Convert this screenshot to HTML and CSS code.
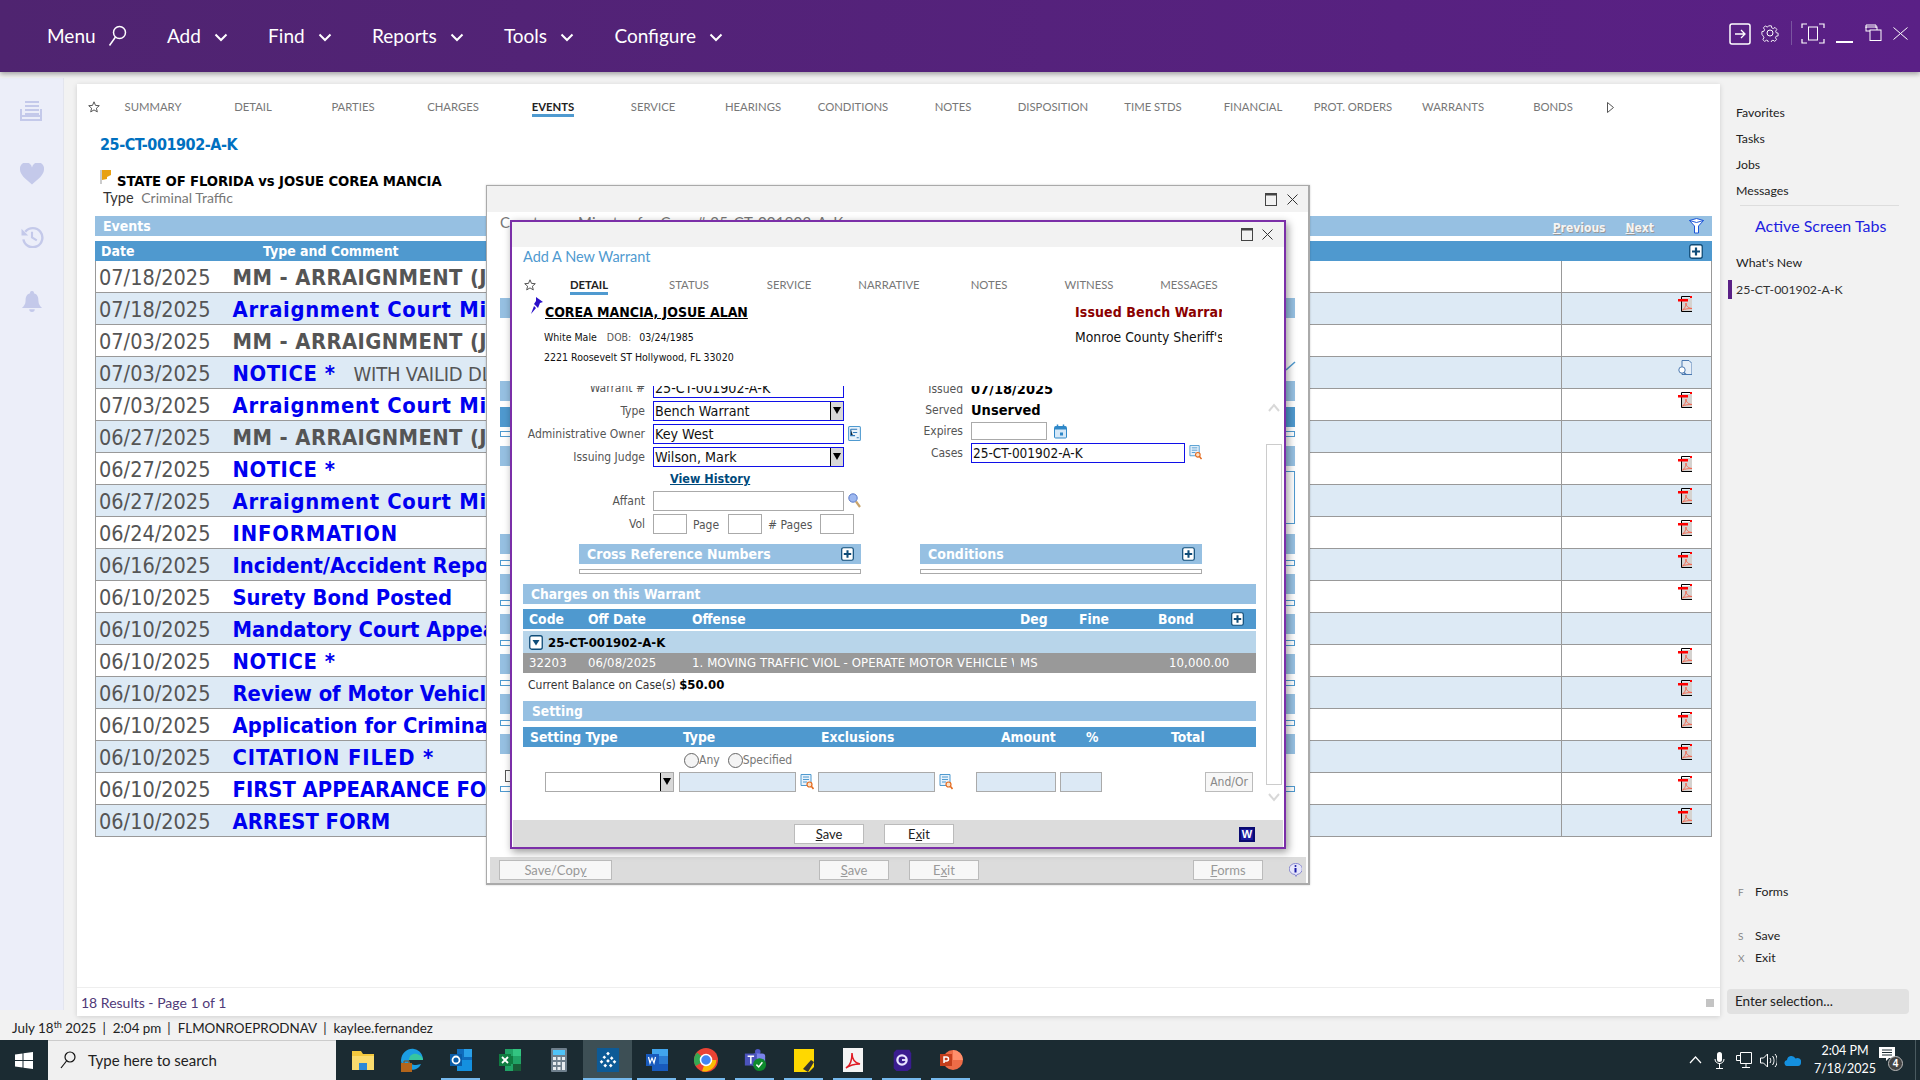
FILE: index.html
```html
<!DOCTYPE html>
<html lang="en">
<head>
<meta charset="utf-8">
<title>25-CT-001902-A-K</title>
<link rel="stylesheet" href="styles.css">
</head>
<body>
<svg class="defs" width="0" height="0" aria-hidden="true">
  <symbol id="chev" viewBox="0 0 14 9"><path d="M1.500 1.500 7 7l5.500-5.500" fill="none" stroke="#fff" stroke-width="2"/></symbol>
  <symbol id="pdf" viewBox="0 0 14 16"><rect x="3.500" y="2" width="10.500" height="13.500" fill="#d5d2cf"/><path d="M3.500 4v11.500H14" fill="none" stroke="#000"/><path d="M3.500.5h10" stroke="#000"/><path d="M3.500.5V3" stroke="#000"/><rect x="0" y="3" width="10" height="2.500" fill="#f00"/><rect x="12" y="0" width="2" height="2" fill="#f00"/><path d="M4.500 14c2-1 3.500-4 3.500-7 0 3 2 5 6 5.500-4 0-7 .5-9.500 1.500z" fill="none" stroke="#f4634d" stroke-width=".9"/></symbol>
  <symbol id="plus" viewBox="0 0 14 15"><rect x=".75" y=".75" width="12.500" height="13.500" rx="2" fill="#fff" stroke="#0f4c78" stroke-width="1.300"/><path d="M7 3.500v8M3 7.500h8" stroke="#0f4c78" stroke-width="2.200"/></symbol>
  <symbol id="pick" viewBox="0 0 14 16"><path d="M1 .5h10v11H1z" fill="#e8f2fb" stroke="#4f9ad0"/><path d="M3 3h6M3 5.500h6M3 8h4" stroke="#4f9ad0"/><circle cx="9.500" cy="10.500" r="2.500" fill="#fde2c8" stroke="#e46a1e" stroke-width="1.200"/><path d="m11.500 12.500 2 2.500" stroke="#e46a1e" stroke-width="1.600"/></symbol>
  <symbol id="restore" viewBox="0 0 12 13"><rect x=".5" y=".5" width="11" height="12" fill="none" stroke="#444"/><path d="M0 1.500h12" stroke="#444" stroke-width="2"/></symbol>
  <symbol id="close" viewBox="0 0 11 11"><path d="M.5.5l10 10M10.500.5l-10 10" stroke="#333" fill="none"/></symbol>
  <symbol id="star" viewBox="0 0 12 12"><path d="M6 .8l1.500 3.600 3.800.3-2.900 2.500.9 3.700L6 8.900 2.700 10.900l.9-3.700L.7 4.700l3.800-.3z" fill="none" stroke="#555"/></symbol>
</svg>

<header class="topbar">
  <nav class="menu">
    <span class="menu-item">Menu
      <svg class="ic-search" viewBox="0 0 19 22"><circle cx="11.500" cy="7.500" r="6" fill="none" stroke="#fff" stroke-width="1.500"/><path d="M7.500 12 1.500 20.500" stroke="#fff" stroke-width="1.500"/></svg>
    </span>
    <span class="menu-item">Add <svg class="ic-chev"><use href="#chev"/></svg></span>
    <span class="menu-item">Find <svg class="ic-chev"><use href="#chev"/></svg></span>
    <span class="menu-item">Reports <svg class="ic-chev"><use href="#chev"/></svg></span>
    <span class="menu-item">Tools <svg class="ic-chev"><use href="#chev"/></svg></span>
    <span class="menu-item">Configure <svg class="ic-chev"><use href="#chev"/></svg></span>
  </nav>
  <div class="win-tools">
    <svg class="wt wt-arrow" viewBox="0 0 22 22"><rect x="1" y="1" width="20" height="20" rx="2" fill="none" stroke="#fff" stroke-width="1.500"/><path d="M6 11h10M12 7l4 4-4 4" fill="none" stroke="#fff" stroke-width="1.300"/></svg>
    <svg class="wt wt-gear" viewBox="0 0 18 18"><circle cx="9" cy="9" r="3" fill="none" stroke="#fff"/><path d="M7.500 1h3l.4 2.300 1.700.8 2-1.300 2 2.200-1.300 2 .6 1.700 2.100.5v3l-2.200.4-.7 1.700 1.300 2-2.100 2-2-1.300-1.600.7-.5 2.200h-3l-.4-2.200-1.700-.7-2 1.300-2.100-2 1.300-2-.7-1.700L0 10.500v-3l2.300-.5.700-1.700-1.300-2 2.100-2.200 2 1.300 1.300-.7z" transform="translate(.9 .9) scale(.9)" fill="none" stroke="#fff"/></svg>
    <span class="wt-sep"></span>
    <svg class="wt wt-full" viewBox="0 0 24 21"><path d="M1 5V1h5M18 1h5v4M23 16v4h-5M6 20H1v-4" fill="none" stroke="#fff" stroke-width="1.200"/><rect x="7.500" y="4" width="9" height="13" fill="none" stroke="#fff"/></svg>
    <span class="wt-min"></span>
    <svg class="wt wt-rest" viewBox="0 0 17 17"><path d="M1 4V1h10v3" fill="none" stroke="#fff"/><rect x="1" y="3" width="11" height="4" fill="none" stroke="#fff"/><rect x="5" y="6" width="11" height="10.500" fill="#572084" stroke="#fff"/></svg>
    <svg class="wt wt-x" viewBox="0 0 15 13"><path d="M.5.5l14 12M14.500.5l-14 12" stroke="#fff" fill="none"/></svg>
  </div>
</header>

<div class="middle">
  <aside class="rail">
    <svg class="rail-ic" viewBox="0 0 24 20"><path d="M1 8v11h20V8M5 1h14M5 5h14M5 9h14M5 13h14M1 15h20" fill="none" stroke="#c4c9ea" stroke-width="2"/></svg>
    <svg class="rail-ic" viewBox="0 0 24 21"><path d="M12 21C5 15 0 11 0 6a6 6 0 0 1 12-2 6 6 0 0 1 12 2c0 5-5 9-12 15z" fill="#c4c9ea"/></svg>
    <svg class="rail-ic" viewBox="0 0 24 23"><path d="M5 6a10 10 0 1 1-2 8" fill="none" stroke="#c4c9ea" stroke-width="2.500"/><path d="M1 3v7h7z" fill="#c4c9ea"/><path d="M12 6v6l5 3" fill="none" stroke="#c4c9ea" stroke-width="2.200"/></svg>
    <svg class="rail-ic rail-bell" viewBox="0 0 22 24"><path d="M11 0a2 2 0 0 1 2 2.500c4 1 5 4 5 8 0 4 2 6 4 8H0c2-2 4-4 4-8 0-4 1-7 5-8A2 2 0 0 1 11 0zM8 20h6a3 3 0 0 1-6 0z" fill="#c4c9ea"/></svg>
  </aside>

  <main class="card">
    <div class="card-body">
      <div class="tabs">
        <svg class="tab-star"><use href="#star"/></svg>
        <span class="tab"><span>SUMMARY</span></span>
        <span class="tab"><span>DETAIL</span></span>
        <span class="tab"><span>PARTIES</span></span>
        <span class="tab"><span>CHARGES</span></span>
        <span class="tab tab-on"><span>EVENTS</span></span>
        <span class="tab"><span>SERVICE</span></span>
        <span class="tab"><span>HEARINGS</span></span>
        <span class="tab"><span>CONDITIONS</span></span>
        <span class="tab"><span>NOTES</span></span>
        <span class="tab"><span>DISPOSITION</span></span>
        <span class="tab"><span>TIME STDS</span></span>
        <span class="tab"><span>FINANCIAL</span></span>
        <span class="tab"><span>PROT. ORDERS</span></span>
        <span class="tab"><span>WARRANTS</span></span>
        <span class="tab"><span>BONDS</span></span>
        <svg class="tab-next" viewBox="0 0 7 11"><path d="M.5.5l6 5-6 5z" fill="none" stroke="#555"/></svg>
      </div>
      <div class="case-no">25-CT-001902-A-K</div>
      <div class="case-title">
        <svg class="flag" viewBox="0 0 12 14"><path d="M1 0v14" stroke="#999"/><path d="M2 0h9v5l-4 2v2L2 10z" fill="#e8a012"/></svg>
        STATE OF FLORIDA vs JOSUE COREA MANCIA
      </div>
      <div class="case-type"><span>Type</span> <span class="muted">Criminal Traffic</span></div>

      <section class="events">
        <div class="ev-bar">
          <span class="ev-bar-title">Events</span>
          <span class="pager"><u>P</u>revious</span>
          <span class="pager pager-next"><u>N</u>ext</span>
          <svg class="filter" viewBox="0 0 15 16"><path d="M.5 2.500 7.500.5l7 2L9.500 8v7h-4V8z" fill="#fff" stroke="#1b55d8"/><path d="M.5 2.500l7 2 7-2" fill="none" stroke="#1b55d8"/></svg>
        </div>
        <div class="ev-head">
          <span class="h-date">Date</span><span class="h-type">Type and Comment</span>
          <svg class="h-plus"><use href="#plus"/></svg>
        </div>
        <div class="ev-row"><div class="c-main"><span class="date">07/18/2025</span><b class="t-gray ls-m">MM - ARRAIGNMENT (JUDGE)</b></div><div class="c-side"></div></div>
        <div class="ev-row alt"><div class="c-main"><span class="date">07/18/2025</span><b class="t-blue ls-a">Arraignment Court Minutes</b></div><div class="c-side"><svg class="pdf"><use href="#pdf"/></svg></div></div>
        <div class="ev-row"><div class="c-main"><span class="date">07/03/2025</span><b class="t-gray ls-m">MM - ARRAIGNMENT (JUDGE)</b></div><div class="c-side"></div></div>
        <div class="ev-row alt"><div class="c-main"><span class="date">07/03/2025</span><b class="t-blue ls-n">NOTICE *</b><span class="comment">WITH VAILID DL</span></div><div class="c-side"><svg class="pdf" viewBox="0 0 14 16"><path d="M4 .5h7l3 3v11H4z" fill="#e6eef7" stroke="#4a78b0"/><circle cx="4" cy="10" r="3.200" fill="#fff" stroke="#4a78b0"/><path d="m6 12.500 2 2" stroke="#4a78b0" stroke-width="1.500"/></svg></div></div>
        <div class="ev-row"><div class="c-main"><span class="date">07/03/2025</span><b class="t-blue ls-a">Arraignment Court Minutes</b></div><div class="c-side"><svg class="pdf"><use href="#pdf"/></svg></div></div>
        <div class="ev-row alt"><div class="c-main"><span class="date">06/27/2025</span><b class="t-gray ls-m">MM - ARRAIGNMENT (JUDGE)</b></div><div class="c-side"></div></div>
        <div class="ev-row"><div class="c-main"><span class="date">06/27/2025</span><b class="t-blue ls-n">NOTICE *</b></div><div class="c-side"><svg class="pdf"><use href="#pdf"/></svg></div></div>
        <div class="ev-row alt"><div class="c-main"><span class="date">06/27/2025</span><b class="t-blue ls-a">Arraignment Court Minutes</b></div><div class="c-side"><svg class="pdf"><use href="#pdf"/></svg></div></div>
        <div class="ev-row"><div class="c-main"><span class="date">06/24/2025</span><b class="t-blue ls-i">INFORMATION</b></div><div class="c-side"><svg class="pdf"><use href="#pdf"/></svg></div></div>
        <div class="ev-row alt"><div class="c-main"><span class="date">06/16/2025</span><b class="t-blue">Incident/Accident Report</b></div><div class="c-side"><svg class="pdf"><use href="#pdf"/></svg></div></div>
        <div class="ev-row"><div class="c-main"><span class="date">06/10/2025</span><b class="t-blue">Surety Bond Posted</b></div><div class="c-side"><svg class="pdf"><use href="#pdf"/></svg></div></div>
        <div class="ev-row alt"><div class="c-main"><span class="date">06/10/2025</span><b class="t-blue">Mandatory Court Appearance</b></div><div class="c-side"></div></div>
        <div class="ev-row"><div class="c-main"><span class="date">06/10/2025</span><b class="t-blue ls-n">NOTICE *</b></div><div class="c-side"><svg class="pdf"><use href="#pdf"/></svg></div></div>
        <div class="ev-row alt"><div class="c-main"><span class="date">06/10/2025</span><b class="t-blue">Review of Motor Vehicle</b></div><div class="c-side"><svg class="pdf"><use href="#pdf"/></svg></div></div>
        <div class="ev-row"><div class="c-main"><span class="date">06/10/2025</span><b class="t-blue">Application for Criminal</b></div><div class="c-side"><svg class="pdf"><use href="#pdf"/></svg></div></div>
        <div class="ev-row alt"><div class="c-main"><span class="date">06/10/2025</span><b class="t-blue ls-i">CITATION FILED *</b></div><div class="c-side"><svg class="pdf"><use href="#pdf"/></svg></div></div>
        <div class="ev-row"><div class="c-main"><span class="date">06/10/2025</span><b class="t-blue">FIRST APPEARANCE FORM</b></div><div class="c-side"><svg class="pdf"><use href="#pdf"/></svg></div></div>
        <div class="ev-row alt"><div class="c-main"><span class="date">06/10/2025</span><b class="t-blue">ARREST FORM</b></div><div class="c-side"><svg class="pdf"><use href="#pdf"/></svg></div></div>
      </section>
    </div>
    <footer class="card-foot"><span>18 Results - Page 1 of 1</span><i class="foot-sq"></i></footer>
  </main>

  <aside class="side">
    <a class="s-link">Favorites</a>
    <a class="s-link">Tasks</a>
    <a class="s-link">Jobs</a>
    <a class="s-link">Messages</a>
    <div class="s-rule"></div>
    <div class="s-head">Active Screen Tabs</div>
    <a class="s-link s-new">What's New</a>
    <a class="s-active">25-CT-001902-A-K</a>
    <div class="s-keys">
      <div class="s-key s-key-forms"><i>F</i>Forms</div>
      <div class="s-key s-key-save"><i>S</i>Save</div>
      <div class="s-key s-key-exit"><i>X</i>Exit</div>
    </div>
    <div class="s-enter">Enter selection...</div>
  </aside>
</div>

<div class="status">July 18<sup>th</sup> 2025<i class="st-sep">|</i>2:04 pm<i class="st-sep">|</i>FLMONROEPRODNAV<i class="st-sep">|</i>kaylee.fernandez</div>

<footer class="taskbar">
  <svg class="start" viewBox="0 0 18 17"><path d="M0 2.500 7.500 1.400V8H0zM8.500 1.300 18 0v8H8.500zM0 9h7.500v6.600L0 14.500zM8.500 9H18v8l-9.500-1.300z" fill="#fff"/></svg>
  <div class="tb-search">
    <svg class="tb-search-ic" viewBox="0 0 16 18"><circle cx="10" cy="6" r="5" fill="none" stroke="#111" stroke-width="1.200"/><path d="M6.500 10 1 17" stroke="#111" stroke-width="1.200"/></svg>
    <span>Type here to search</span>
  </div>
  <div class="tb-apps">
    <span class="app"><svg viewBox="0 0 24 24"><path d="M1 3h9l2 3h11v16H1z" fill="#f4c93e"/><path d="M1 8h22v14H1z" fill="#fbdc6e"/><path d="M8 15h8v7H8z" fill="#2b88d8"/></svg></span>
    <span class="app"><svg viewBox="0 0 24 24"><path d="M1 12C2 4 8 0 14 1c6 1 9 6 9 11H9c0 3 3 5 7 5 2 0 4-1 5-1-2 5-8 7-13 5C3 19 1 16 1 12z" fill="#1b9de2"/><path d="M9 12C9 7 13 5 17 6c3 1 6 3 6 6z" fill="#37c6a0"/><rect x="1" y="15" width="11" height="9" fill="#b3651b"/><path d="M4 15v-2h5v2" fill="none" stroke="#8a4a10"/></svg></span>
    <span class="app on"><svg viewBox="0 0 24 24"><path d="M8 1h15v22H8z" fill="#0f6cbd"/><path d="M15 1h8v8h-8z" fill="#2aa0e8"/><path d="M8 12l15 0v11H8z" fill="#1490df"/><rect x="1" y="6" width="12" height="12" fill="#0a5ca8"/><circle cx="7" cy="12" r="3.500" fill="none" stroke="#fff" stroke-width="1.800"/></svg></span>
    <span class="app"><svg viewBox="0 0 24 24"><path d="M7 1h16v22H7z" fill="#21a366"/><path d="M15 1h8v7h-8z" fill="#33c481"/><path d="M7 8h8v8H7z" fill="#107c41"/><path d="M15 16h8v7h-8z" fill="#185c37"/><rect x="1" y="6" width="12" height="12" fill="#107c41"/><path d="M4 9l6 6M10 9l-6 6" stroke="#fff" stroke-width="1.800"/></svg></span>
    <span class="app"><svg viewBox="0 0 24 24"><rect x="4" y="0" width="16" height="24" rx="1" fill="#6e7f8c"/><rect x="6" y="2" width="12" height="5" fill="#4fc3f7"/><path d="M6 9h3v3H6zM10.500 9h3v3h-3zM15 9h3v3h-3zM6 14h3v3H6zM10.500 14h3v3h-3zM15 14h3v8h-3zM6 19h3v3H6zM10.500 19h3v3h-3z" fill="#e8edf0"/></svg></span>
    <span class="app app-active on"><svg viewBox="0 0 24 26"><rect width="24" height="26" fill="#0d5a96"/><path d="M12 4l2 2-2 2-2-2zM8 8l2 2-2 2-2-2zM16 9l2 2-2 2-2-2zM5 13l2 2-2 2-2-2zM12 12l2 2-2 2-2-2zM19 13l2 2-2 2-2-2zM9 17l2 2-2 2-2-2zM15 17l2 2-2 2-2-2z" fill="#fff"/></svg></span>
    <span class="app on"><svg viewBox="0 0 24 24"><path d="M7 1h16v22H7z" fill="#2b7cd3"/><path d="M7 1h16v7H7z" fill="#41a5ee"/><path d="M7 16h16v7H7z" fill="#185abd"/><rect x="1" y="6" width="13" height="12" fill="#185abd"/><path d="M3.500 9l1.500 6 2-5 2 5 1.500-6" fill="none" stroke="#fff" stroke-width="1.200"/></svg></span>
    <span class="app on"><svg viewBox="0 0 24 24"><circle cx="12" cy="12" r="12" fill="#ea4335"/><path d="M12 12 1.600 18A12 12 0 0 1 3 4.500z" fill="#34a853"/><path d="M12 12l10.400 0A12 12 0 0 1 8 23.300z" fill="#fbbc05"/><circle cx="12" cy="12" r="5.500" fill="#4285f4" stroke="#fff" stroke-width="1.500"/></svg></span>
    <span class="app on"><svg viewBox="0 0 24 26"><circle cx="15" cy="4" r="3" fill="#5059c9"/><rect x="9" y="6" width="14" height="14" rx="3" fill="#7b83eb"/><rect x="1" y="6" width="13" height="13" fill="#4b53bc"/><path d="M4 9h7M7.500 9v8" stroke="#fff" stroke-width="1.600"/><circle cx="17" cy="18" r="7" fill="#0e8a2c"/><path d="M13.500 18l2.500 2.500 4-5" fill="none" stroke="#fff" stroke-width="1.600"/></svg></span>
    <span class="app on"><svg viewBox="0 0 24 24"><path d="M2 1h20v18l-5 5H2z" fill="#ffd800"/><path d="M11 21l8-9 3 2-6 10z" fill="#333"/></svg></span>
    <span class="app on"><svg viewBox="0 0 24 24"><path d="M2 0h20v24H2z" fill="#f4f4f4"/><path d="M5 20c4-2 6-8 6-15 0 6 3 10 8 11-6 0-10 1-14 4z" fill="none" stroke="#e01b24" stroke-width="1.500"/></svg></span>
    <span class="app on"><svg viewBox="0 0 24 26"><path d="M6 2h14l2 4v16l-4 3H6l-3-3V5z" fill="#3a1c90"/><circle cx="12" cy="13" r="5" fill="none" stroke="#e8e4ff" stroke-width="2.500"/><path d="M12 13h5" stroke="#e8e4ff" stroke-width="2"/></svg></span>
    <span class="app on"><svg viewBox="0 0 24 24"><circle cx="14" cy="12" r="10" fill="#ed6c47"/><path d="M14 2a10 10 0 0 1 10 10H14z" fill="#ff8f6b"/><rect x="1" y="6" width="12" height="12" fill="#c43e1c"/><path d="M5 15V9h2.500a2 2 0 0 1 0 4H5" fill="none" stroke="#fff" stroke-width="1.500"/></svg></span>
  </div>
  <div class="tray">
    <svg class="tr tr-chev" viewBox="0 0 13 8"><path d="M1 7l5.500-6L12 7" fill="none" stroke="#fff" stroke-width="1.200"/></svg>
    <svg class="tr tr-mic" viewBox="0 0 11 17"><rect x="3" y="0" width="5" height="10" rx="2.500" fill="#fff"/><path d="M1 7c0 6 9 6 9 0M5.500 11v5M2 16.500h7" fill="none" stroke="#fff"/></svg>
    <svg class="tr tr-net" viewBox="0 0 16 16"><path d="M4.500.5h11v11h-11zM.5 3.500h4M.5 3.500v5h4M10 12v3M6 15.500h8" fill="none" stroke="#fff"/></svg>
    <svg class="tr tr-vol" viewBox="0 0 17 15"><path d="M.5 5h3l4-4v13l-4-4h-3z" fill="none" stroke="#fff"/><path d="M10 5c1 1.500 1 3.500 0 5M12.500 3c2 2.500 2 6.500 0 9M15 1c3 3.500 3 9.500 0 13" fill="none" stroke="#fff"/></svg>
    <svg class="tr tr-cloud" viewBox="0 0 17 11"><path d="M4 11a3 3 0 0 1-1-6 4.500 4.500 0 0 1 8.500-1.500A3.800 3.800 0 0 1 17 8c0 1.500-1 3-3 3z" fill="#1490df"/></svg>
    <div class="clock"><div>2:04 PM</div><div>7/18/2025</div></div>
    <div class="notif">
      <svg class="notif-ic" viewBox="0 0 16 14"><path d="M0 0h16v11h-6l-3 3v-3H0z" fill="#fff"/><path d="M3 3h10M3 5.500h10M3 8h10" stroke="#1b2b32"/></svg>
      <span class="notif-badge">4</span>
    </div>
    <i class="tr-edge"></i>
  </div>
</footer>

<!-- Floating windows -->
<div class="win win-back">
  <div class="win-title"><svg class="w-rest"><use href="#restore"/></svg><svg class="w-x"><use href="#close"/></svg></div>
  <div class="back-body">
    <div class="back-head">Courtroom Minutes for Case # 25-CT-001902-A-K</div>
    <div class="g g1"></div>
    <div class="g g2"></div>
    <div class="g g3 dark"></div>
    <div class="g g4 out"></div>
    <div class="g g5"></div>
    <div class="g g6 out"></div>
    <div class="g g7"></div>
    <div class="g g8 out"></div>
    <div class="g g9"></div>
    <div class="g g8 out"></div>
    <div class="g g9"></div>
    <div class="g g8 out"></div>
    <div class="g g9"></div>
    <div class="g g8 out"></div>
    <div class="g g9"></div>
    <div class="g g8 out"></div>
    <div class="g g9"></div>
    <div class="g g10 out"></div>
    <i class="back-check"></i>
    <svg class="back-tick" viewBox="0 0 10 10"><path d="M0 9 9 1" stroke="#4f99cf" stroke-width="1.500"/></svg>
  </div>
  <div class="win-foot back-foot">
    <span class="btn dis b-copy"><span>Save/Cop<u>y</u></span></span>
    <span class="btn dis b-save"><span><u>S</u>ave</span></span>
    <span class="btn dis b-exit"><span>E<u>x</u>it</span></span>
    <span class="btn dis b-forms"><span><u>F</u>orms</span></span>
    <svg class="info" viewBox="0 0 13 14"><path d="M6.500.5a6 5.500 0 0 1 1.500 11l-1 2-1-2a6 5.500 0 0 1 .5-11z" fill="#e6e6fa" stroke="#8a8ad0"/><circle cx="6.500" cy="3" r="1" fill="#1a1aa8"/><path d="M6.500 5v4.500" stroke="#1a1aa8" stroke-width="2"/></svg>
  </div>
</div>

<div class="win win-front">
  <div class="win-title wf-title"><svg class="w-rest"><use href="#restore"/></svg><svg class="w-x"><use href="#close"/></svg></div>
  <div class="wf-head">Add A New Warrant</div>
  <div class="wf-tabs">
    <svg class="wf-star"><use href="#star"/></svg>
    <span class="tab tab-on"><span>DETAIL</span></span>
    <span class="tab"><span>STATUS</span></span>
    <span class="tab"><span>SERVICE</span></span>
    <span class="tab"><span>NARRATIVE</span></span>
    <span class="tab"><span>NOTES</span></span>
    <span class="tab"><span>WITNESS</span></span>
    <span class="tab"><span>MESSAGES</span></span>
  </div>
  <div class="person">
    <div class="person-l">
      <div class="p-name">
        <svg class="pin" viewBox="0 0 14 17"><path d="M6 0l7 5-3 1-2 5-4-4 2-3zM4 9l-3 8 5-6" fill="#2a10c8"/></svg>
        <u>COREA MANCIA, JOSUE ALAN</u>
      </div>
      <div class="p-sub">White Male <span class="p-dob">DOB:</span> 03/24/1985</div>
      <div class="p-sub p-addr">2221 Roosevelt ST Hollywood, FL 33020</div>
    </div>
    <div class="person-r">
      <div class="p-status">Issued Bench Warrant</div>
      <div class="p-agency">Monroe County Sheriff's Office</div>
    </div>
  </div>
  <div class="scroller">
    <div class="form">
      <div class="f-col f-left">
        <div class="frow"><label>Warrant #</label><span class="in in-blue in-w">25-CT-001902-A-K</span></div>
        <div class="frow"><label>Type</label><span class="in in-blue in-w in-sel">Bench Warrant<i class="arrow"></i></span></div>
        <div class="frow"><label>Administrative Owner</label><span class="in in-blue in-w">Key West</span>
          <svg class="f-ic" viewBox="0 0 12 14"><rect x=".5" y=".5" width="11" height="13" rx="1" fill="#e8f2fb" stroke="#4f9ad0"/><path d="M2.500 3h6M2.500 3v6h2M4.500 6h4M4.500 9h2M8 11h2" stroke="#2f78b8"/></svg></div>
        <div class="frow"><label>Issuing Judge</label><span class="in in-blue in-w in-sel">Wilson, Mark<i class="arrow"></i></span></div>
        <div class="frow-link"><a>View History</a></div>
        <div class="frow"><label>Affant</label><span class="in in-w"></span>
          <svg class="f-ic" viewBox="0 0 13 15"><circle cx="5" cy="5" r="4.200" fill="#9db8f0" stroke="#5a7ac8"/><path d="m8 8.500 4 5.500" stroke="#c9a36a" stroke-width="2.200"/></svg></div>
        <div class="frow"><label>Vol</label><span class="in in-s"></span><em>Page</em><span class="in in-s in-p2"></span><em class="em-pages"># Pages</em><span class="in in-s in-p3"></span></div>
      </div>
      <div class="f-col f-right">
        <div class="rrow r1"><label>Issued</label><b>07/18/2025</b></div>
        <div class="rrow r1"><label>Served</label><b>Unserved</b></div>
        <div class="rrow r2"><label>Expires</label><span class="in in-exp"></span>
          <svg class="f-ic cal" viewBox="0 0 13 14"><rect x=".5" y="2" width="12" height="11.500" rx="1" fill="#d5e8f8" stroke="#2f88c8"/><path d="M1 2h11v3H1z" fill="#2f88c8"/><path d="M3.500 0v2M9.500 0v2" stroke="#2f88c8" stroke-width="1.500"/><rect x="6" y="8" width="3" height="3" fill="#2f88c8"/></svg></div>
        <div class="rrow r3"><label>Cases</label><span class="in in-blue in-case">25-CT-001902-A-K</span><svg class="f-ic pk"><use href="#pick"/></svg></div>
      </div>
    </div>
    <div class="xrefs">
      <div class="xref"><div class="bar bar-x">Cross Reference Numbers<svg class="bar-plus"><use href="#plus"/></svg></div><div class="x-empty"></div></div>
      <div class="xref"><div class="bar bar-x">Conditions<svg class="bar-plus"><use href="#plus"/></svg></div><div class="x-empty"></div></div>
    </div>
    <div class="section">
      <div class="bar">Charges on this Warrant</div>
      <div class="grid-head gh-charges">
        <span>Code</span><span>Off Date</span><span>Offense</span><span>Deg</span><span>Fine</span><span>Bond</span>
        <svg class="gh-plus"><use href="#plus"/></svg>
      </div>
      <div class="ch-group">
        <svg class="toggle" viewBox="0 0 14 15"><rect x=".75" y=".75" width="12.500" height="13.500" rx="2" fill="#fff" stroke="#0f4c78" stroke-width="1.300"/><path d="M3.500 5h7L7 10.500z" fill="#0f4c78"/></svg>
        <b>25-CT-001902-A-K</b>
      </div>
      <div class="ch-row">
        <span>32203</span><span>06/08/2025</span><span class="ch-off">1. MOVING TRAFFIC VIOL - OPERATE MOTOR VEHICLE WITHOUT</span><span>MS</span><span class="ch-bond">10,000.00</span>
      </div>
      <div class="balance">Current Balance on Case(s) <b>$50.00</b></div>
      <div class="bar bar-set">Setting</div>
      <div class="grid-head gh-setting">
        <span>Setting Type</span><span>Type</span><span>Exclusions</span><span>Amount</span><span>%</span><span>Total</span>
      </div>
      <div class="radios"><i class="radio"></i><span>Any</span><i class="radio r-2"></i><span>Specified</span></div>
      <div class="set-row">
        <span class="in in-sel set-sel"><i class="arrow"></i></span>
        <span class="in set-in set-w1"></span><svg class="f-ic set-ic"><use href="#pick"/></svg>
        <span class="in set-in set-w1 set-w2"></span><svg class="f-ic set-ic"><use href="#pick"/></svg>
        <span class="in set-in set-amt"></span>
        <span class="in set-in set-pct"></span>
        <span class="btn dis set-btn"><span>And/Or</span></span>
      </div>
    </div>
    <div class="sbar">
      <svg class="sb-arrow" viewBox="0 0 12 9"><path d="M1 8l5-6 5 6" fill="none" stroke="#d8d8d8" stroke-width="2"/></svg>
      <div class="sb-thumb"></div>
      <svg class="sb-arrow" viewBox="0 0 12 9"><path d="M1 1l5 6 5-6" fill="none" stroke="#d8d8d8" stroke-width="2"/></svg>
    </div>
  </div>
  <div class="win-foot front-foot">
    <span class="btn f-save"><span><u>S</u>ave</span></span>
    <span class="btn f-exit"><span>E<u>x</u>it</span></span>
    <span class="word-ic">W</span>
  </div>
</div>
</body>
</html>
```

FILE: styles.css
```css
* { box-sizing: border-box; }
html, body { margin: 0; height: 100%; }
body {
  width: 1920px; height: 1080px; overflow: hidden; position: relative;
  background: #f2f2f2; display: flex; flex-direction: column;
  font-family: Lato, "Open Sans", sans-serif; color: #222;
}
.defs { position: absolute; }
svg { display: block; flex: none; }

/* Top bar */
.topbar {
  height: 72px; flex: none; display: flex; align-items: center; justify-content: space-between;
  background: linear-gradient(90deg, #4f2470, #5a2086);
  box-shadow: 0 2px 5px rgba(0,0,0,.35); position: relative; z-index: 2;
  padding: 0 12px 0 47px;
}
.menu { display: flex; gap: 40.300px; }
.menu-item { color: #fff; font-size: 19px; display: flex; align-items: center; gap: 13px; line-height: 28px; }
.ic-search { width: 19px; height: 22px; margin-left: -1px; }
.ic-chev { width: 14px; height: 9px; margin-top: 3px; }
.win-tools { display: flex; align-items: flex-start; height: 24px; margin-top: -2px; }
.wt { height: auto; }
.wt-arrow { width: 22px; height: 22px; }
.wt-gear { width: 18px; height: 18px; margin: 1px 0 0 10px; }
.wt-sep { width: 1px; height: 24px; background: #7a55a0; margin: -2px 0 0 12px; }
.wt-full { width: 24px; height: 21px; margin-left: 9px; }
.wt-min { width: 17px; height: 2px; background: #fff; margin: 18px 0 0 11px; }
.wt-rest { width: 17px; height: 17px; margin: 1px 0 0 12px; }
.wt-x { width: 15px; height: 13px; margin: 4px 0 0 11px; }

/* Middle */
.middle { flex: none; height: 944px; display: flex; }
.rail {
  width: 64px; margin-top: 6px; height: 932px; background: #eceef9; border-right: 1px solid #e3e5ee;
  display: flex; flex-direction: column; align-items: center; padding-top: 22px; flex: none;
}
.rail-ic { width: 24px; height: 22px; margin-bottom: 41px; }
.rail-bell { margin-top: 2px; }
.card {
  width: 1643px; height: 932px; margin: 12px 0 0 13px; background: #fff; flex: none;
  box-shadow: 0 1px 5px rgba(0,0,0,.15); display: flex; flex-direction: column;
}
.card-body { flex: 1; }
.tabs { display: flex; align-items: flex-start; padding: 16px 0 0 11px; height: 44px; }
.tab-star { width: 12px; height: 12px; margin: 1px 3px 0 0; }
.tab { width: 100px; flex: none; text-align: center; font-size: 11.300px; color: #777; line-height: 14px; }
.tab > span { display: inline-block; height: 17px; white-space: nowrap; }
.tab-on { color: #222; font-weight: 700; }
.tab-on > span { border-bottom: 3px solid #4f9ad0; }
.tab-next { width: 7px; height: 11px; margin: 2px 0 0 4px; }
.case-no { font: 700 16px/20px "DejaVu Sans Condensed", "DejaVu Sans", sans-serif; color: #0070c0; margin: 0 0 0 23px; height: 38px; padding-top: 7px; letter-spacing: -.45px; }
.case-title { display: flex; align-items: center; font: 700 14.700px/18px "DejaVu Sans Condensed", "DejaVu Sans", sans-serif; color: #000; margin-left: 23px; height: 18px; letter-spacing: -.1px; margin-top: 6px; }
.flag { width: 12px; height: 14px; margin: -8px 5px 0 0; }
.case-type { font-size: 14.500px; line-height: 17px; margin: -1px 0 0 26px; color: #333; }
.muted { color: #777; margin-left: 4px; font-size: 14px; }

.events { margin: 10px 8px 0 18px; }
.ev-bar { height: 20px; background: #96c0e2; display: flex; align-items: center; padding-left: 8px; }
.ev-bar-title { font: 700 14px/20px "DejaVu Sans Condensed", sans-serif; color: #fff; flex: 1; }
.pager { font: 700 12px/20px "DejaVu Sans Condensed", sans-serif; color: #f4f4f4; text-shadow: 1px 1px 0 #999; margin-top: 4px; }
.pager-next { margin: 4px 0 0 20px; }
.filter { width: 15px; height: 16px; margin: 0 8px 0 35px; }
.ev-head { height: 20px; margin-top: 5px; background: #4f99cf; display: flex; align-items: center; color: #fff; font: 700 14px/22px "DejaVu Sans Condensed", sans-serif; padding-left: 6px; }
.h-date { width: 162px; }
.h-type { flex: 1; }
.h-plus { width: 14px; height: 15px; margin-right: 9px; }
.ev-row { height: 32px; display: flex; border-bottom: 1px solid #999; border-left: 1px solid #999; border-right: 1px solid #999; background: #fff; }
.alt { background: #ddeaf5; }
.c-main { width: 1466px; display: flex; align-items: center; padding: 2px 0 0 3px; font-family: "DejaVu Sans Condensed", "DejaVu Sans", sans-serif; font-size: 21.500px; white-space: nowrap; overflow: hidden; border-right: 1px solid #999; flex: none; }
.date { color: #555; width: 133.500px; flex: none; }
.t-gray, .t-blue { font-size: 21.800px; }
.t-gray { color: #555; }
.t-blue { color: #0000f0; }
.ls-m { letter-spacing: .4px; }
.ls-a { letter-spacing: .7px; }
.ls-n { letter-spacing: .55px; }
.ls-i { letter-spacing: .9px; }
.comment { color: #555; margin-left: 18px; font-size: 20px; letter-spacing: -.2px; }
.c-side { flex: 1; padding: 3px 0 0 116px; }
.pdf { width: 14px; height: 16px; }

.card-foot { height: 29px; border-top: 1px solid #eee; display: flex; align-items: center; justify-content: space-between; padding: 0 6px 0 4px; font-size: 14px; color: #4f3a78; flex: none; }
.foot-sq { width: 8px; height: 8px; background: #c4c4c4; margin-top: 2px; }

/* Right side */
.side { width: 192px; margin-left: 8px; flex: none; height: 944px; display: flex; flex-direction: column; padding-top: 28px; font-size: 12.300px; }
.s-link { display: block; line-height: 26px; padding-left: 8px; color: #222; }
.s-rule { width: 159px; height: 1px; background: #ddd; margin: 1px 0 0 12px; }
.s-head { font-size: 16px; color: #1f1fe0; line-height: 22px; padding-left: 27px; margin-top: 9px; }
.s-new { margin-top: 13px; }
.s-active { display: block; height: 19px; line-height: 19px; border-left: 4px solid #5a2086; padding-left: 4px; color: #333; margin-top: 4px; }
.s-keys { margin-top: auto; padding-left: 10px; }
.s-key { line-height: 22px; display: flex; font-size: 12.300px; }
.s-key i { width: 17px; font-style: normal; color: #888; font-size: 10px; }
.s-key-forms { margin-bottom: 22px; }
.s-enter { width: 182px; height: 25px; margin: 20px 0 2px -1px; background: #e1e1e1; border-radius: 4px; font-size: 13.500px; line-height: 25px; padding-left: 8px; }

/* Status + taskbar */
.status { height: 24px; flex: none; font-size: 13.400px; line-height: 24px; padding-left: 12px; color: #222; white-space: nowrap; }
.status sup { font-size: 9px; line-height: 0; }
.st-sep { font-style: normal; margin: 0 7px 0 6px; }
.taskbar { height: 40px; flex: none; background: #1b2b32; display: flex; align-items: stretch; position: relative; }
.start { width: 18px; height: 17px; margin: 12px 15px 0 15px; }
.tb-search { width: 288px; background: #f0f0f0; display: flex; align-items: center; padding: 0 0 2px 12px; font-size: 15px; color: #222; border-top: 1px solid #ccc; }
.tb-search-ic { width: 16px; height: 18px; margin-right: 12px; }
.tb-apps { display: flex; margin-left: 2px; }
.app { width: 49px; display: flex; align-items: center; justify-content: center; position: relative; }
.app svg { width: 24px; height: 24px; }
.app.on::after { content: ""; position: absolute; left: 5px; right: 5px; bottom: 0; height: 2px; background: #76b9ed; }
.app-active { background: #3d4f55; }
.app-active.on::after { left: 0; right: 0; }
.tray { margin-left: auto; display: flex; align-items: center; color: #fff; font-size: 12.500px; }
.tr-chev { width: 13px; height: 8px; }
.tr-mic { width: 11px; height: 17px; margin-left: 12px; }
.tr-net { width: 16px; height: 16px; margin-left: 11px; }
.tr-vol { width: 17px; height: 15px; margin-left: 8px; }
.tr-cloud { width: 17px; height: 11px; margin-left: 7px; }
.clock { width: 70px; margin-left: 9px; text-align: center; line-height: 18px; }
.notif { width: 24px; height: 30px; margin-left: -1px; position: relative; }
.notif-ic { width: 16px; height: 14px; margin-top: 2px; }
.notif-badge { position: absolute; left: 9px; top: 11px; width: 15px; height: 15px; border-radius: 50%; background: #444; border: 1px solid #bbb; color: #fff; font: 700 10px/13px "Liberation Sans", sans-serif; text-align: center; }
.tr-edge { width: 1px; height: 40px; background: #4a5a60; margin-left: 12px; margin-right: 4px; }

/* Windows */
.win { position: absolute; background: #fff; }
.win-back { left: 486px; top: 185px; width: 824px; height: 700px; border: 2px solid #aaa; border-width: 1px 2px 2px 1px; display: flex; flex-direction: column; box-shadow: 0 0 2px rgba(0,0,0,.2); }
.win-front { left: 510px; top: 220px; width: 776px; height: 629px; border: 2px solid #7b2fa8; display: flex; flex-direction: column; box-shadow: 2px 3px 8px rgba(0,0,0,.4); }
.win-title { height: 26px; background: #f2f2f2; display: flex; justify-content: flex-end; align-items: center; flex: none; padding-right: 10px; }
.w-rest { width: 12px; height: 13px; margin-right: 10px; }
.w-x { width: 11px; height: 11px; }
.wf-title { height: 25px; padding-right: 11px; }
.wf-title .w-rest { margin-right: 9px; }
.back-body { flex: 1; padding: 1px 13px 0 13px; overflow: hidden; position: relative; }
.back-head { height: 72px; font: 15px/18px Lato, sans-serif; color: #777; letter-spacing: .2px; }
.g { background: #96c0e2; height: 20px; }
.g1 { margin-top: 13px; }
.g2 { margin-top: 63px; }
.g3 { margin-top: 6px; background: #4f99cf; }
.g4 { margin-top: 4px; height: 6px; }
.out { background: #fff; border: 1px solid #4f9ad0; }
.g5 { margin-top: 9px; }
.g6 { margin: 5px 0 0 auto; width: 60px; height: 53px; }
.g7 { margin-top: 10px; }
.g8 { margin-top: 6px; height: 6px; }
.g9 { margin-top: 8px; }
.g10 { margin-top: 32px; height: 6px; }
.back-check { position: absolute; left: 18px; top: 558px; width: 8px; height: 12px; border: 1px solid #555; background: #fff; }
.back-tick { position: absolute; right: 12px; top: 149px; width: 10px; height: 10px; }
.win-foot { background: #dcdcdc; flex: none; display: flex; position: relative; }
.back-foot { height: 26px; padding: 3px 0 0 9px; margin: 0 2px 0 3px; }
.btn { height: 20px; background: #fff; border: 1px solid #bbb; display: flex; align-items: center; justify-content: center; font-size: 13px; color: #222; flex: none; }
.dis { color: #999; background: #f7f7f7; }
.b-copy { width: 113px; }
.b-save { width: 70px; margin-left: 207px; }
.b-exit { width: 70px; margin-left: 20px; }
.b-forms { width: 70px; margin-left: 214px; }
.info { width: 13px; height: 14px; margin: 3px 0 0 26px; }

.wf-head { height: 20px; flex: none; font-size: 14.500px; line-height: 20px; color: #4f9ad0; padding-left: 11px; }
.wf-tabs { display: flex; align-items: flex-start; height: 28px; padding: 11px 0 0 12px; flex: none; }
.wf-star { width: 12px; height: 12px; margin: 1px 3px 0 0; }
.person { height: 91px; flex: none; display: flex; font-family: "DejaVu Sans Condensed", "DejaVu Sans", sans-serif; overflow: hidden; }
.person-l { width: 563px; padding-left: 18px; }
.p-name { display: flex; font: 700 14px/18px "DejaVu Sans Condensed", sans-serif; color: #000; margin-top: 8px; height: 23px; letter-spacing: -.05px; }
.pin { width: 14px; height: 17px; margin: -6px 1px 0 0; }
.p-sub { font-size: 10.500px; line-height: 14px; color: #111; padding-left: 14px; margin-top: 4px; height: 20px; }
.p-dob { color: #555; margin: 0 5px 0 7px; }
.p-addr { margin-top: 0; }
.person-r { width: 147px; overflow: hidden; white-space: nowrap; }
.p-status { font: 700 14px/18px "DejaVu Sans Condensed", sans-serif; color: #8b0000; margin-top: 8px; letter-spacing: .1px; }
.p-agency { font-size: 13.800px; line-height: 18px; color: #111; margin-top: 7px; }

.scroller { height: 434px; flex: none; overflow: hidden; position: relative; font-family: "DejaVu Sans Condensed", "DejaVu Sans", sans-serif; font-size: 12px; }
.form { display: flex; margin-top: -8px; height: 166px; }
.f-left { width: 388px; }
.frow { display: flex; height: 23px; align-items: flex-start; padding-left: 1px; }
.frow label { width: 132px; text-align: right; margin-right: 8px; color: #555; line-height: 20px; font-size: 12px; white-space: nowrap; }
.in { height: 20px; display: block; border: 1px solid #aaa; background: #fff; font-size: 14.200px; line-height: 18px; padding-left: 1px; color: #111; position: relative; white-space: nowrap; flex: none; }
.in-blue { border-color: #1010e8; }
.in-w { width: 191px; }
.in-sel .arrow { position: absolute; right: 0; top: 0; bottom: 0; width: 13px; background: #d8d8d8 linear-gradient(#000,#000) no-repeat 0 0 / 1px 100%; }
.in-sel .arrow::after { content: ""; position: absolute; left: 3px; top: 5px; border: 4px solid transparent; border-top: 7px solid #000; border-bottom: 0; }
.f-ic { width: 13px; height: 15px; margin: 2px 0 0 4px; }
.frow-link { height: 21px; padding-left: 158px; line-height: 18px; }
.frow-link a { color: #004a7c; text-decoration: underline; font-weight: 700; font-size: 12.500px; }
.in-s { width: 34px; }
.in-p2 { margin-left: 9px; }
.in-p3 { margin-left: 8px; }
.frow em { font-style: normal; color: #555; margin-left: 6px; line-height: 22px; font-size: 12px; }
.rrow { display: flex; align-items: center; }
.rrow label { width: 63px; text-align: right; margin-right: 8px; color: #555; font-size: 12px; }
.rrow b { font-size: 14.500px; color: #000; }
.r1 { height: 21px; }
.r2 { height: 22px; }
.r3 { height: 21px; }
.in-exp { width: 76px; height: 18px; }
.cal { margin: 0 0 0 7px; }
.in-case { width: 214px; font-size: 13.500px; }
.pk { margin: 0 0 0 4px; }
.xrefs { display: flex; padding-left: 67px; gap: 59px; }
.xref { width: 282px; }
.bar { height: 20px; background: #96c0e2; color: #fff; font-weight: 700; font-size: 13.700px; line-height: 20px; padding-left: 8px; position: relative; }
.bar-x { padding-left: 8px; font-size: 14px; }
.bar-plus { position: absolute; right: 7px; top: 3px; width: 13px; height: 14px; }
.x-empty { height: 5px; margin-top: 5px; border: 1px solid #aaa; }
.section { width: 733px; margin: 10px 0 0 11px; }
.grid-head { height: 20px; margin-top: 5px; background: #4f99cf; color: #fff; font-weight: 700; font-size: 13.800px; line-height: 20px; display: grid; position: relative; }
.gh-charges { grid-template-columns: 59px 104px 328px 59px 79px 1fr; padding-left: 6px; }
.gh-plus { position: absolute; right: 12px; top: 3px; width: 13px; height: 14px; }
.ch-group { height: 22px; margin-top: 2px; background: #b8d5ea; display: flex; align-items: center; padding-left: 6px; font-size: 13px; color: #000; }
.toggle { width: 14px; height: 15px; margin-right: 5px; }
.ch-row { height: 20px; background: #999; color: #fff; display: grid; grid-template-columns: 59px 104px 328px 149px 1fr; padding-left: 6px; line-height: 20px; font-size: 13px; letter-spacing: .1px; white-space: nowrap; }
.ch-off { overflow: hidden; margin-right: 6px; }
.balance { height: 28px; line-height: 24px; padding-left: 5px; font-size: 12px; color: #333; }
.balance b { color: #000; font-size: 13px; }
.bar-set { padding-left: 9px; }
.gh-setting { grid-template-columns: 153px 138px 180px 85px 85px 1fr; padding-left: 7px; margin-top: 6px; }
.radios { height: 14px; margin-top: 6px; padding-left: 161px; display: flex; align-items: center; color: #777; font-size: 12px; }
.radio { width: 15px; height: 15px; border-radius: 50%; border: 1px solid #666; background: #f4f4f4; flex: none; }
.r-2 { margin-left: 8px; }
.set-row { display: flex; margin-top: 5px; padding-left: 22px; }
.set-sel { width: 129px; }
.set-in { background: #dce9f5; }
.set-w1 { width: 117px; margin-left: 5px; }
.set-w2 { margin-left: 4px; }
.set-ic { width: 14px; height: 16px; margin: 2px 0 0 4px; }
.set-amt { width: 80px; margin-left: 23px; }
.set-pct { width: 42px; margin-left: 4px; }
.set-btn { width: 48px; margin-left: 103px; color: #888; font-family: "DejaVu Sans Condensed", sans-serif; font-size: 12px; }
.sbar { position: absolute; right: 2px; top: 17px; width: 16px; display: flex; flex-direction: column; align-items: center; }
.sb-arrow { width: 12px; height: 9px; }
.sb-thumb { width: 16px; height: 341px; margin: 32px 0 8px; border: 1px solid #ccc; background: #fff; }
.front-foot { height: 27px; margin: 0 1px; padding: 4px 0 0 281px; }
.f-save { width: 70px; }
.f-exit { width: 70px; margin-left: 20px; }
.word-ic { width: 16px; height: 15px; background: #1a1a9c; color: #fff; font: 700 11px/11px "Liberation Sans", sans-serif; text-align: center; margin: 3px 0 0 285px; border: 2px solid #0a0a70; }
```
